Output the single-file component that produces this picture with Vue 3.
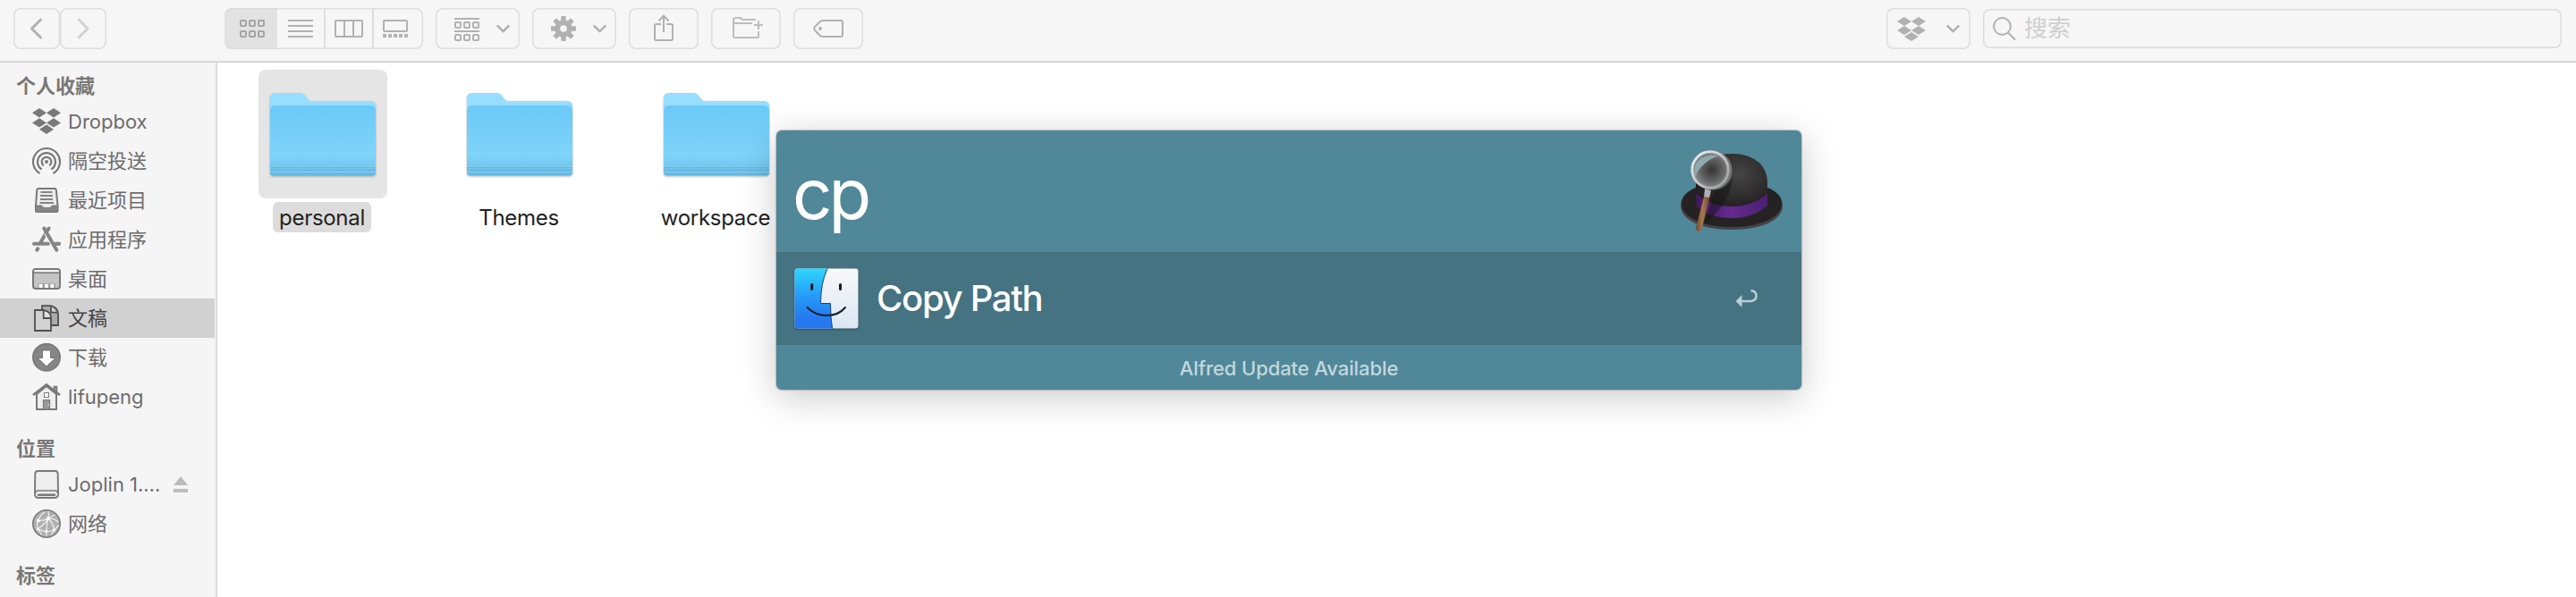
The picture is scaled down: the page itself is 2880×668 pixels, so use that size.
<script setup>
const favorites = [
  { icon: 'dropbox', label: 'Dropbox' },
  { icon: 'airdrop', label: '隔空投送' },
  { icon: 'recents', label: '最近项目' },
  { icon: 'apps', label: '应用程序' },
  { icon: 'desktop', label: '桌面' },
  { icon: 'documents', label: '文稿', active: true },
  { icon: 'downloads', label: '下载' },
  { icon: 'home', label: 'lifupeng' },
]
const locations = [
  { icon: 'drive', label: 'Joplin 1.…', eject: true },
  { icon: 'network', label: '网络' },
]
const sections = [
  { title: '个人收藏', items: favorites },
  { title: '位置', items: locations },
  { title: '标签', items: [] },
]
const folders = [
  { name: 'personal', selected: true },
  { name: 'Themes' },
  { name: 'workspace' },
]
</script>

<template>
  <div class="window">
    <header class="toolbar">
      <div class="nav">
        <button class="btn nav-btn">
          <svg viewBox="0 0 52 46"><path d="M30.5 13 20.5 23l10 10" class="ln w3" /></svg>
        </button>
        <button class="btn nav-btn">
          <svg viewBox="0 0 52 46"><path d="M21 13 31 23 21 33" class="ln w3 dim" /></svg>
        </button>
      </div>

      <div class="btn views">
        <div class="seg on">
          <svg viewBox="251 9 59 46">
            <g class="ln sq">
              <rect v-for="i in 6" :key="i" :x="269 + ((i - 1) % 3) * 10" :y="i > 3 ? 35 : 23" width="6" height="6" rx="1" />
            </g>
          </svg>
        </div>
        <div class="seg mid">
          <svg viewBox="310 9 52 46"><path d="M322 23h28M322 29h28M322 35h28M322 41h28" class="ln flat" /></svg>
        </div>
        <div class="seg">
          <svg viewBox="364 9 52 46"><rect x="375" y="23" width="30" height="18" rx="1" class="ln" /><path d="M385 23v18M395 23v18" class="ln" /></svg>
        </div>
        <div class="seg last">
          <svg viewBox="418 9 55 46">
            <rect x="429" y="23" width="26" height="12" rx="1" class="ln" />
            <rect v-for="i in 5" :key="i" :x="422 + i * 6" y="38" width="4" height="4" rx=".8" class="fl" />
          </svg>
        </div>
      </div>

      <button class="btn wide">
        <svg viewBox="487 9 94 46">
          <path d="M508 21h28M508 35h28" class="ln flat" />
          <g class="ln">
            <rect v-for="i in 6" :key="i" :x="509 + ((i - 1) % 3) * 10" :y="i > 3 ? 39 : 25" width="6" height="6" rx="1" />
          </g>
          <path d="M556.5 29.2l6 6 6-6" class="ln chev" />
        </svg>
      </button>

      <button class="btn wide">
        <svg viewBox="595 9 94 46">
          <g class="fl">
            <rect v-for="i in 4" :key="i" x="627.3" y="18" width="5.4" height="28" rx="1" :transform="`rotate(${i * 45} 630 32)`" />
            <circle cx="630" cy="32" r="9.8" />
          </g>
          <circle cx="630" cy="32" r="3.8" class="hole" />
          <path d="M664.500 29.200l6 6 6-6" class="ln chev" />
        </svg>
      </button>

      <button class="btn mid-btn">
        <svg viewBox="703 9 78 46"><path d="M739 27h-5.500q-1.500 0-1.500 1.500V43.500q0 1.500 1.500 1.500h17q1.500 0 1.500-1.500V28.500q0-1.500-1.500-1.500H745M742 36V17.500M736.500 23.500 742 17.500l5.500 6" class="ln flat" /></svg>
      </button>
      <button class="btn mid-btn">
        <svg viewBox="795 9 78 46"><path d="M845 22h-15l-2-2h-6q-2 0-2 2v18.500q0 1.500 1.500 1.500h25.500q1 0 1-1v-6M820 26h21M848 23v10M843 28h10" class="ln flat thin" /></svg>
      </button>
      <button class="btn mid-btn">
        <svg viewBox="887 9 78 46"><path d="M920 23h20q2 0 2 2v14q0 2-2 2h-20q-2 0-3.500-1.500l-5-5q-2.500-2.500 0-5l5-5Q918 23 920 23z" class="ln" /><circle cx="917" cy="32" r="2" class="fl" /></svg>
      </button>

      <div class="spacer"></div>

      <button class="btn wide">
        <svg viewBox="2110 9 94 46">
          <path d="M2130 19l8 5-8 5-8-5zM2146 19l8 5-8 5-8-5zM2130 29l8 5-8 5-8-5zM2146 29l8 5-8 5-8-5zM2138 36l8 5-8 5-8-5z" class="fl" />
          <path d="M2178.500 29.200l6 6 6-6" class="ln chev" />
        </svg>
      </button>
      <div class="search">
        <svg viewBox="0 0 28 28"><circle cx="11.500" cy="11.500" r="9.400" class="ln" /><path d="M18 18.500l7.500 7.500" class="ln" /></svg>
        <span>搜索</span>
      </div>
    </header>

    <div class="body">
      <aside class="sidebar">
        <section v-for="s in sections" :key="s.title">
          <h2>{{ s.title }}</h2>
          <div v-for="it in s.items" :key="it.label" class="item" :class="{ active: it.active }">
            <svg class="ico" viewBox="0 0 32 32">
              <path v-if="it.icon === 'dropbox'" fill="#797979" d="M8 1l8 5.200-8 5.200L0 6.200zM24 1l8 5.200-8 5.200-8-5.200zM8 12.200l8 5.200-8 5.200-8-5.200zM24 12.200l8 5.200-8 5.200-8-5.200zM16 19.600l8 5.200-8 5.200-8-5.200z" />
              <g v-else-if="it.icon === 'airdrop'" fill="none" stroke="#797979" stroke-width="2.200">
                <path d="M8.500 30A15 15 0 1 1 23.500 30M10.600 25.500A10 10 0 1 1 21.400 25.500M12.800 21.300A5.300 5.300 0 1 1 19.200 21.300" />
                <circle cx="16" cy="17" r="2" fill="#797979" stroke="none" />
              </g>
              <g v-else-if="it.icon === 'recents'">
                <path d="M7 3h18q1.500 0 1.800 1.500L28.500 22v5.500q0 1.500-1.500 1.500H5.500Q4 29 4 27.500V22L5.300 4.500Q5.500 3 7 3z" fill="#ececec" stroke="#797979" stroke-width="2" />
                <path d="M4 22h6.500l2.500 2.500h7l2.500-2.500h6v5.500q0 1.500-1.500 1.500H5.500Q4 29 4 27.500z" fill="#858585" stroke="#797979" />
                <path d="M9.500 7h13M9 11h14M9 15h14M8.500 19h15.500" stroke="#858585" stroke-width="1.800" />
              </g>
              <g v-else-if="it.icon === 'apps'" stroke="#858585" stroke-width="4" stroke-linecap="round" fill="none">
                <path d="M18.600 3.500 9.500 19M6.200 26.300l-.8 1.400M2 20.700h16M28 20.700h2" />
                <path d="M16 8.500 27.500 27.800" stroke="#f5f5f5" stroke-width="6" stroke-linecap="butt" />
                <path d="M13.300 3.500 27.300 27.800" />
                <path d="M26 20.700h4" />
              </g>
              <g v-else-if="it.icon === 'desktop'">
                <rect x="1" y="5" width="30" height="22" rx="3" fill="#c4c4c4" stroke="#797979" stroke-width="2" />
                <path d="M2 8.500v-.5q0-2 2-2h24q2 0 2 2v.500z" fill="#f5f5f5" />
                <path d="M2 9.200h28" stroke="#797979" stroke-width="1.500" />
                <path d="M6.500 21.500h19.300V26H6.500z" fill="#999" />
                <path d="M7.600 22h4v4h-4zM14 22h4v4h-4zM20.300 22h4v4h-4z" fill="#fff" />
              </g>
              <g v-else-if="it.icon === 'documents'" stroke="#4f4f4f" stroke-width="1.800">
                <path d="M11 2.200h10q8 2 8 10V24H11z" fill="#aaa" />
                <path d="M21 2.200v7.500h7" fill="#d2d2d2" />
                <path d="M3 7h10q8 2 8 10v13H3z" fill="#d2d2d2" />
                <path d="M12.700 7v9h8.300q0-5-4-7.500z" fill="#e0e0e0" />
              </g>
              <g v-else-if="it.icon === 'downloads'">
                <circle cx="16" cy="15.800" r="15.200" fill="#858585" stroke="#797979" stroke-width="1.600" />
                <path d="M11.500 8h9v8.500h5.500L16 26 6 16.500h5.500z" fill="#fff" stroke="#737373" />
              </g>
              <g v-else-if="it.icon === 'home'">
                <path d="M24.500 11V4.500h3V14" fill="#999" stroke="#797979" stroke-width="1.500" />
                <path d="M5 13 16 4l11 9v17H5z" fill="#eee" stroke="#797979" stroke-width="2" />
                <path d="M1 14 16 2.500 31 14" fill="none" stroke="#797979" stroke-width="2.800" />
                <rect x="13.500" y="11.500" width="5" height="5" fill="#fff" stroke="#797979" />
                <path d="M12.500 30V19.500h7V30z" fill="#999" stroke="#797979" stroke-width="1.200" />
                <circle cx="18.400" cy="25" r=".7" fill="#eee" />
              </g>
              <g v-else-if="it.icon === 'drive'">
                <path d="M6.500 1h19q3 0 3.200 3L29 27q0 4-4 4H7q-4 0-4-4L3.300 4Q3.500 1 6.500 1z" fill="#eee" stroke="#797979" stroke-width="1.900" />
                <path d="M3.500 26q0-3 3-3h19q3 0 3 3" fill="none" stroke="#797979" stroke-width="1.500" />
                <path d="M7 27.800h18" stroke="#797979" stroke-width="2.400" stroke-linecap="round" />
              </g>
              <g v-else-if="it.icon === 'network'">
                <circle cx="16" cy="16" r="15.200" fill="#b0b0b0" stroke="#797979" stroke-width="1.600" />
                <path d="M6.500 12.500Q13 13 18 10M18 10q4-3 7.500-3.500M18 10q1-4 0-8M6.500 12.500Q9 6 14 3M6.500 12.500q-2 6 0 9.500M6.500 22q10 5 19 1M18 10q-3 6-11 11M18 10q5 5 7 13M16 30v-6q0-8 2-14M18 10q7 0 11 4M6.500 22l4 6M25 23l-3.500 5M25 23q3-4 5-5" fill="none" stroke="#f5f5f5" stroke-width="1.100" />
                <g fill="#fff"><circle cx="6.800" cy="12.500" r="1.900" /><circle cx="18" cy="10" r="2" /><circle cx="6.500" cy="22" r="1.500" /><circle cx="24.500" cy="23" r="1.600" /><circle cx="15.800" cy="24.500" r="1.500" /></g>
              </g>
            </svg>
            <span>{{ it.label }}</span>
            <svg v-if="it.eject" class="eject" viewBox="0 0 16 18"><path d="M8 0l8 10H0zM0 14h16v4H0z" fill="#bcbcbc" /></svg>
          </div>
        </section>
      </aside>

      <main class="files">
        <div v-for="f in folders" :key="f.name" class="file" :class="{ selected: f.selected }">
          <div class="thumb">
            <svg viewBox="0 0 120 98">
              <defs>
                <linearGradient id="front" x1="0" y1="0" x2="0" y2="1">
                  <stop offset="0" stop-color="#6bc9f7" />
                  <stop offset=".7" stop-color="#7ed4fa" />
                  <stop offset=".85" stop-color="#76c9ef" />
                  <stop offset="1" stop-color="#66b9e6" />
                </linearGradient>
              </defs>
              <path d="M1 7q0-6 6-6h27q4 0 6 3l3 4q1.500 2 4 2h66q6 0 6 6v72q0 5-4 5H5q-4 0-4-5z" class="back" />
              <path d="M1 21q0-6 6-6h106q6 0 6 6v68.500q0 4-4 4H5q-4 0-4-4z" fill="url(#front)" />
              <path d="M1 84.500h118M1 87.500h118M1 91.500h118" stroke="#5fb2dc" stroke-width="1" opacity=".75" />
              <path d="M1 83.500h118M1 89.500h118" stroke="#8fd6f5" stroke-width="1" opacity=".6" />
            </svg>
          </div>
          <span class="name">{{ f.name }}</span>
        </div>
      </main>
    </div>

    <div class="alfred">
      <div class="query">
        <span class="typed">cp</span>
        <svg class="hat" viewBox="0 0 120 96">
          <defs>
            <radialGradient id="dome" cx=".6" cy=".35" r=".6"><stop offset="0" stop-color="#454545" /><stop offset="1" stop-color="#231f20" /></radialGradient>
            <radialGradient id="lens" cx=".55" cy=".5" r=".6"><stop offset="0" stop-color="#333" /><stop offset=".6" stop-color="#666" /><stop offset="1" stop-color="#929a9c" /></radialGradient>
            <linearGradient id="band" x1="0" x2="1" y1="0" y2="0"><stop offset="0" stop-color="#43185f" /><stop offset=".5" stop-color="#65298f" /><stop offset="1" stop-color="#4b2070" /></linearGradient>
            <linearGradient id="wood" x1="0" x2="1" y1="0" y2="0"><stop offset="0" stop-color="#6b4930" /><stop offset=".5" stop-color="#a57950" /><stop offset="1" stop-color="#6d482d" /></linearGradient>
            <linearGradient id="rim" x1="0" x2="1" y1="0" y2="1"><stop offset="0" stop-color="#f2f2f2" /><stop offset="1" stop-color="#9c9c9c" /></linearGradient>
          </defs>
          <path d="M1 59C1 49 8 43 18 39h80c10 4 17 10 17 20 0 17-25 27-57 27S1 76 1 59z" fill="#454345" />
          <path d="M2 57C3 48 9 43 18 39h80c9 4 16 9 16 18 0 16-26 26-56 26S2 73 2 57z" fill="#252223" />
          <path d="M18 54V34C18 13 34 1 58 1s40 12 40 33v20q-14 12-40 12T18 54z" fill="url(#dome)" />
          <path d="M18 45q15 15 40 15t40-15v14q-16 14-40 14T20 61q-2-4-2-16z" fill="url(#band)" />
          <path d="M39 42q16-2 20-15-2 26-24 46l-7 7z" fill="#111" opacity=".45" />
          <path d="M28 40l7 2-2 9-6-1z" fill="#aeb1b2" />
          <path d="M27 49l6.500 1-9.500 37.500q-4 1-6.500-1.500z" fill="url(#wood)" />
          <circle cx="36.500" cy="19.500" r="20.500" fill="none" stroke="#777" stroke-width="3" />
          <circle cx="34" cy="19" r="19" fill="url(#lens)" />
          <path d="M17 27C13 10 26 0 44 3 32 7 22 15 17 27z" fill="#8fa9af" />
          <circle cx="34" cy="19" r="20.200" fill="none" stroke="url(#rim)" stroke-width="3" />
        </svg>
      </div>
      <div class="result">
        <svg class="finder" viewBox="0 0 72 68">
          <defs>
            <linearGradient id="blue" x1="0" x2="0" y1="0" y2="1"><stop offset="0" stop-color="#2fd6fd" /><stop offset=".5" stop-color="#2596f8" /><stop offset=".85" stop-color="#2678f0" /></linearGradient>
            <linearGradient id="white" x1="0" x2="0" y1="0" y2="1"><stop offset="0" stop-color="#f8f8f8" /><stop offset="1" stop-color="#dbe7f5" /></linearGradient>
          </defs>
          <rect x="0.500" y="0.500" width="71" height="67" rx="3" fill="url(#white)" />
          <path d="M3.500.5H37Q29.500 17 29.500 39.500H40.500Q40.500 55 42.500 67.500H3.500q-3 0-3-3V3.500q0-3 3-3z" fill="url(#blue)" />
          <path d="M37 .5Q29.500 17 29.500 39.500H40.500Q40.500 55 42.500 67.500" fill="none" stroke="#17456b" stroke-width="1" />
          <path d="M19.700 18.500v5M51.500 18.500v5" stroke="#151d20" stroke-width="3" stroke-linecap="round" />
          <path d="M14.500 44q9 9 22 9t20.500-9" fill="none" stroke="#151d28" stroke-width="2" stroke-linecap="round" />
        </svg>
        <span class="title">Copy Path</span>
        <svg class="enter" viewBox="0 0 26 20"><path d="M17.500 1.200q6 .3 6 5.800t-6 6H7" fill="none" stroke="#b9cdd3" stroke-width="2.600" /><path d="M.5 13 7.500 6v14z" fill="#b9cdd3" /></svg>
      </div>
      <div class="update">Alfred Update Available</div>
    </div>
  </div>
</template>

<style>
body { background: #fff; }
</style>

<style scoped>
* { box-sizing: border-box; }
.window {
  position: relative;
  width: 2880px;
  height: 668px;
  overflow: hidden;
  display: flex;
  flex-direction: column;
  background: #fff;
  font-family: Inter, "Noto Sans CJK SC", sans-serif;
}
svg { display: block; flex: none; }
.toolbar {
  height: 70px;
  flex: none;
  padding: 9px 16px 0 15px;
  display: flex;
  align-items: flex-start;
  gap: 14px;
  background: #f6f6f6;
  border-bottom: 1px solid #cdcdcd;
  box-shadow: inset 0 -1px #e3e3e3;
}
.btn {
  height: 46px;
  padding: 0;
  margin: 0;
  border: none;
  border-radius: 8px;
  background: #f6f6f6;
  box-shadow: inset 0 0 0 1.5px #dedede;
  overflow: hidden;
}
.btn svg { height: 46px; width: 100%; }
.nav { display: flex; width: 104px; margin-right: 118px; }
.nav-btn { width: 52px; }
.views { width: 222px; display: flex; }
.seg { width: 54px; }
.seg + .seg { border-left: 2px solid #dedede; }
.seg.on { width: 59px; background: #e2e2e2; border-radius: 8px 0 0 8px; box-shadow: inset 0 1.5px #dadada, inset 0 -1.5px #dadada; }
.seg.mid { width: 52px; border-left: none; }
.seg.last { width: 57px; }
.wide { width: 94px; }
.mid-btn { width: 78px; }
.spacer { flex: 1; }
.ln { fill: none; stroke: #b1b1b1; stroke-width: 2; stroke-linecap: round; stroke-linejoin: round; }
.ln.flat { stroke-linecap: butt; }
.ln.thin { stroke: #bdbdbd; }
.ln.sq { stroke: #a5a5a5; }
.ln.w3 { stroke-width: 3; stroke: #b0b0b0; }
.ln.w3.dim { stroke: #d2d2d2; }
.ln.chev { stroke-width: 2.6; }
.fl { fill: #b1b1b1; }
.hole { fill: #f6f6f6; }
.search {
  width: 647px;
  height: 44px;
  margin-top: 1px;
  padding-left: 10px;
  display: flex;
  align-items: center;
  gap: 8px;
  border-radius: 8px;
  box-shadow: inset 0 0 0 1.5px #dcdcdc;
  color: #cfcfcf;
  font-size: 26px;
  line-height: 46px;
}
.search svg { width: 28px; height: 28px; }
.body { flex: 1; display: flex; min-height: 0; }
.sidebar {
  width: 243px;
  flex: none;
  background: #f5f5f5;
  border-right: 2px solid #dcdcdc;
  color: #6c6c6c;
  font-size: 22px;
  overflow: hidden;
}
h2 {
  margin: 18px 0 0 18px;
  height: 36px;
  font-size: 22px;
  line-height: 36px;
  font-weight: 700;
  color: #787878;
}
section:first-child h2 { margin-top: 0; padding-top: 8px; height: 44px; }
.item {
  width: 240px;
  height: 44px;
  padding-left: 36px;
  display: flex;
  align-items: center;
  font-weight: 400;
  line-height: 44px;
  white-space: nowrap;
}
.item.active { background: #d1d1d1; color: #444; }
.ico { width: 32px; height: 32px; margin-right: 8px; }
.eject { width: 16px; height: 18px; margin-left: auto; margin-right: 30px; }
.files { display: flex; padding: 8px 0 0 46px; gap: 76px; align-items: flex-start; }
.file { width: 144px; display: flex; flex-direction: column; align-items: center; }
.thumb { width: 144px; height: 144px; padding: 25px 0 0 12px; border-radius: 8px; }
.thumb svg { width: 120px; height: 98px; filter: drop-shadow(0 1px 1px rgba(0, 0, 0, .3)); }
.back { fill: #97defe; }
.name {
  margin: 4px 2px 0 0;
  padding: 0 7px;
  height: 34px;
  border-radius: 6px;
  font-size: 24px;
  letter-spacing: -.3px;
  line-height: 36px;
  color: #222;
}
.selected .thumb { background: #e5e5e5; }
.selected .name { width: 110px; text-align: center; background: #dcdcdc; }
.alfred {
  position: absolute;
  left: 868px;
  top: 146px;
  width: 1146px;
  height: 290px;
  border-radius: 6px;
  background: #508899;
  box-shadow: 0 0 1px 1px rgba(0, 0, 0, .2), 0 8px 40px rgba(0, 0, 0, .22);
  overflow: hidden;
  color: #fff;
}
.query {
  height: 136px;
  padding: 0 16px 0 18px;
  display: flex;
  align-items: center;
  justify-content: space-between;
}
.typed { padding-top: 4px; font-size: 78px; font-weight: 400; letter-spacing: -4px; }
.hat { width: 120px; height: 96px; margin-top: 10px; overflow: visible; }
.result {
  height: 104px;
  padding: 0 48px 0 20px;
  display: flex;
  align-items: center;
  background: #457382;
}
.title { padding-bottom: 2px; font-size: 40px; font-weight: 500; letter-spacing: -1.3px; }
.finder { width: 72px; height: 68px; margin-right: 20px; filter: drop-shadow(0 1px 1px rgba(0, 0, 0, .35)); }
.enter { width: 26px; height: 20px; margin-left: auto; }
.update { height: 50px; line-height: 52px; text-align: center; font-size: 22px; font-weight: 500; letter-spacing: -.1px; color: #c3d7dd; }
</style>
